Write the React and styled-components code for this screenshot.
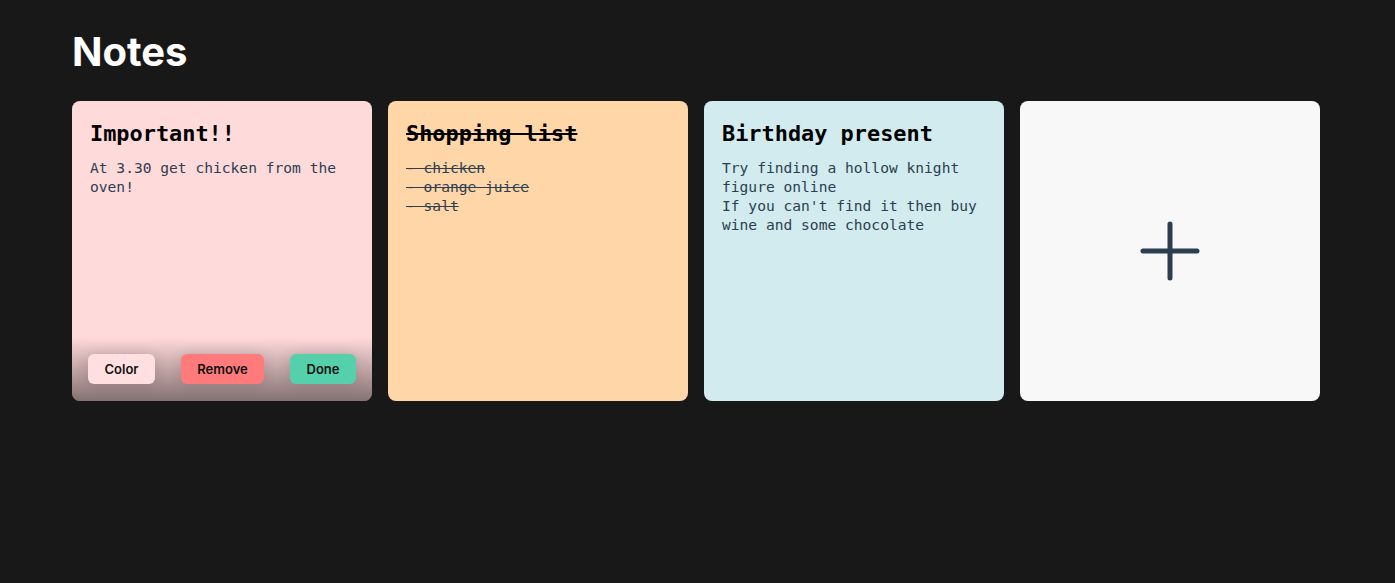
import React from "react";
import styled, { createGlobalStyle } from "styled-components";

const Global = createGlobalStyle`
  html, body { margin: 0; padding: 0; background: #181818; }
  body { font-family: Inter, "Liberation Sans", sans-serif; }
`;

const Page = styled.div`
  padding: 26px 72px;
`;

const Heading = styled.h1`
  margin: 0 0 23px;
  color: #ffffff;
  font-family: Inter, sans-serif;
  font-weight: 700;
  font-size: 40px;
  line-height: 52px;
`;

const Grid = styled.div`
  display: flex;
  gap: 16px;
`;

const Card = styled.div`
  position: relative;
  width: 300px;
  height: 300px;
  box-sizing: border-box;
  border-radius: 8px;
  background: ${(p) => p.$bg};
  padding: 19px 18px 18px;
  overflow: hidden;
  display: flex;
  flex-direction: column;
`;

const AddCard = styled(Card)`
  padding: 0;
  align-items: center;
  justify-content: center;
  cursor: pointer;
`;

const Title = styled.h2`
  margin: 0 0 10px;
  font-family: "DejaVu Sans Mono", "Liberation Mono", monospace;
  font-weight: 700;
  font-size: 21.9px;
  line-height: 28px;
  color: #000;
  text-decoration: ${(p) => (p.$done ? "line-through" : "none")};
`;

const Body = styled.p`
  margin: 0;
  font-family: "DejaVu Sans Mono", "Liberation Mono", monospace;
  font-size: 14.6px;
  line-height: 19px;
  color: #2c3e50;
  white-space: pre-wrap;
  text-decoration: ${(p) => (p.$done ? "line-through" : "none")};
`;

const Actions = styled.div`
  position: absolute;
  left: 0;
  right: 0;
  bottom: 0;
  height: 64px;
  padding: 0 16px 17px;
  box-sizing: border-box;
  display: flex;
  align-items: flex-end;
  justify-content: space-between;
  background: linear-gradient(to bottom, rgba(0, 0, 0, 0), rgba(0, 0, 0, 0.48));
`;

const Button = styled.button`
  height: 30px;
  padding: 0 16.5px;
  border: none;
  border-radius: 6px;
  background: ${(p) => p.$bg};
  font-family: Inter, sans-serif;
  font-weight: 600;
  font-size: 13px;
  color: #111;
  cursor: pointer;
  box-shadow: 0 0 14px rgba(0, 0, 0, 0.12);
`;

const notes = [
  {
    title: "Important!!",
    body: "At 3.30 get chicken from the oven!",
    bg: "#ffdadb",
    actions: true,
  },
  {
    title: "Shopping list",
    body: "- chicken\n- orange juice\n- salt",
    bg: "#ffd6a8",
    done: true,
  },
  {
    title: "Birthday present",
    body: "Try finding a hollow knight figure online\nIf you can't find it then buy wine and some chocolate",
    bg: "#d2ebef",
  },
];

export default function App() {
  return (
    <>
      <Global />
      <Page>
        <Heading>Notes</Heading>
        <Grid>
          {notes.map((n) => (
            <Card key={n.title} $bg={n.bg}>
              <Title $done={n.done}>{n.title}</Title>
              <Body $done={n.done}>{n.body}</Body>
              {n.actions && (
                <Actions>
                  <Button $bg="#ffdfe0">Color</Button>
                  <Button $bg="#ff7b7b">Remove</Button>
                  <Button $bg="#55d0ab">Done</Button>
                </Actions>
              )}
            </Card>
          ))}
          <AddCard $bg="#f8f8f8">
            <svg width="62" height="62" viewBox="0 0 62 62" fill="none">
              <path d="M31 4v54M4 31h54" stroke="#2c3e50" strokeWidth="5" strokeLinecap="round" />
            </svg>
          </AddCard>
        </Grid>
      </Page>
    </>
  );
}
